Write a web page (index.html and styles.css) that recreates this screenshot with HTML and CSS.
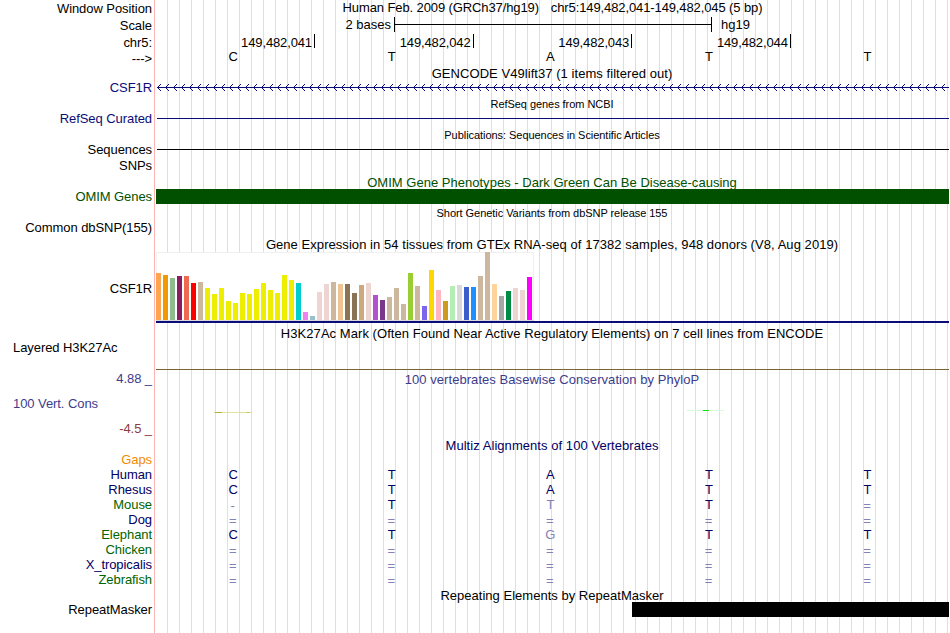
FILE: index.html
```html
<!DOCTYPE html>
<html lang="en">
  <head>
    <meta charset="utf-8" />
    <title>UCSC Genome Browser - hg19 chr5:149,482,041-149,482,045</title>
    <meta name="viewport" content="width=device-width, initial-scale=1" />
    <link rel="stylesheet" href="styles.css">
  </head>
  <body>
    <main class="browser">
      <!-- Ruler -->
      <div class="row window-row">
        <div class="label">Window Position</div>
        <div class="track window-title"><span>Human Feb. 2009 (GRCh37/hg19)</span><span>chr5:149,482,041-149,482,045 (5 bp)</span></div>
      </div>
      <div class="row scale-row">
        <div class="label">Scale</div>
        <div class="track scale">
          <span class="scale-size">2 bases</span>
          <div class="scale-bar"><div class="scale-line"></div></div>
          <span>hg19</span>
        </div>
      </div>
      <div class="row position-row">
        <div class="label">chr5:</div>
        <div class="track positions">
          <span>149,482,041</span>
          <span>149,482,042</span>
          <span>149,482,043</span>
          <span>149,482,044</span>
        </div>
      </div>
      <div class="row base-row">
        <div class="label">---&gt;</div>
        <div class="track bases"><span>C</span><span>T</span><span>A</span><span>T</span><span>T</span></div>
      </div>

      <!-- Gene tracks -->
      <h2 class="title">GENCODE V49lift37 (1 items filtered out)</h2>
      <div class="row">
        <div class="label navy">CSF1R</div>
        <div class="track">
          <svg class="intron" width="793" height="15" shape-rendering="crispEdges">
            <defs>
              <pattern id="chevron" width="8" height="15" patternUnits="userSpaceOnUse">
                <path d="M1 7h1v1h-1zM2 6h1v1h-1zM2 8h1v1h-1zM3 5h1v1h-1zM3 9h1v1h-1zM4 4h1v1h-1zM4 10h1v1h-1z" fill="#0c0c78" />
              </pattern>
            </defs>
            <rect width="793" height="15" fill="url(#chevron)" />
            <rect x="1" y="7" width="792" height="1" fill="#0c0c78" />
          </svg>
        </div>
      </div>

      <h2 class="title small">RefSeq genes from NCBI</h2>
      <div class="row">
        <div class="label navy">RefSeq Curated</div>
        <div class="track"><div class="thin-line navy-line"></div></div>
      </div>

      <h2 class="title small">Publications: Sequences in Scientific Articles</h2>
      <div class="row">
        <div class="label">Sequences</div>
        <div class="track"><div class="thin-line"></div></div>
      </div>
      <div class="row">
        <div class="label">SNPs</div>
      </div>

      <h2 class="title omim">OMIM Gene Phenotypes - Dark Green Can Be Disease-causing</h2>
      <div class="row">
        <div class="label omim">OMIM Genes</div>
        <div class="track"><div class="block omim-block"></div></div>
      </div>

      <h2 class="title small">Short Genetic Variants from dbSNP release 155</h2>
      <div class="row">
        <div class="label">Common dbSNP(155)</div>
      </div>

      <!-- GTEx expression -->
      <h2 class="title">Gene Expression in 54 tissues from GTEx RNA-seq of 17382 samples, 948 donors (V8, Aug 2019)</h2>
      <div class="row gtex-row">
        <div class="label">CSF1R</div>
        <div class="track gtex">
          <div class="gtex-chart" id="gtex-chart"></div>
          <div class="gene-model"></div>
        </div>
      </div>

      <!-- Regulation and conservation -->
      <h2 class="title">H3K27Ac Mark (Often Found Near Active Regulatory Elements) on 7 cell lines from ENCODE</h2>
      <div class="row layered-row">
        <div class="label left">Layered H3K27Ac</div>
        <div class="track"><div class="layered-line"></div></div>
      </div>

      <div class="row phylop-title-row">
        <div class="label phylop">4.88 _</div>
        <h2 class="title phylop">100 vertebrates Basewise Conservation by PhyloP</h2>
      </div>
      <div class="row phylop-row">
        <div class="label phylop-labels">
          <div class="left phylop">100 Vert. Cons</div>
          <div class="negative">-4.5 _</div>
        </div>
        <div class="track">
          <svg class="wiggle" width="793" height="51" shape-rendering="crispEdges">
            <rect x="58" y="26" width="38" height="1" fill="#e2e2a0" />
            <rect x="59" y="26" width="7" height="1" fill="#b4b432" />
            <rect x="90" y="26" width="4" height="1" fill="#c8c864" />
            <rect x="531" y="24" width="37" height="1" fill="#d8fad8" />
            <rect x="547" y="24" width="6" height="1" fill="#00f000" />
          </svg>
        </div>
      </div>

      <!-- Multiz alignment -->
      <h2 class="title multiz">Multiz Alignments of 100 Vertebrates</h2>
      <div class="row species">
        <div class="label gaps">Gaps</div>
      </div>
      <div class="row species">
        <div class="label dark-blue">Human</div>
        <div class="track bases"><span>C</span><span>T</span><span>A</span><span>T</span><span>T</span></div>
      </div>
      <div class="row species">
        <div class="label dark-blue">Rhesus</div>
        <div class="track bases"><span>C</span><span>T</span><span>A</span><span>T</span><span>T</span></div>
      </div>
      <div class="row species">
        <div class="label green">Mouse</div>
        <div class="track bases"><span class="gap">-</span><span>T</span><span class="diff">T</span><span>T</span><span class="gap">=</span></div>
      </div>
      <div class="row species">
        <div class="label dark-blue">Dog</div>
        <div class="track bases"><span class="gap">=</span><span class="gap">=</span><span class="gap">=</span><span class="gap">=</span><span class="gap">=</span></div>
      </div>
      <div class="row species">
        <div class="label green">Elephant</div>
        <div class="track bases"><span>C</span><span>T</span><span class="diff">G</span><span>T</span><span>T</span></div>
      </div>
      <div class="row species">
        <div class="label green">Chicken</div>
        <div class="track bases"><span class="gap">=</span><span class="gap">=</span><span class="gap">=</span><span class="gap">=</span><span class="gap">=</span></div>
      </div>
      <div class="row species">
        <div class="label dark-blue">X_tropicalis</div>
        <div class="track bases"><span class="gap">=</span><span class="gap">=</span><span class="gap">=</span><span class="gap">=</span><span class="gap">=</span></div>
      </div>
      <div class="row species">
        <div class="label green">Zebrafish</div>
        <div class="track bases"><span class="gap">=</span><span class="gap">=</span><span class="gap">=</span><span class="gap">=</span><span class="gap">=</span></div>
      </div>

      <h2 class="title repeat">Repeating Elements by RepeatMasker</h2>
      <div class="row">
        <div class="label">RepeatMasker</div>
        <div class="track"><div class="block repeat-block"></div></div>
      </div>
    </main>

    <script>
      // [height in px, tissue color]
      const tissues = [
        [47, "#ffa54f"], [45, "#ee9a00"], [42, "#8fbc8f"], [44, "#8b1c62"], [44, "#ee6a50"],
        [37, "#ff0000"], [38, "#cdb79e"], [32, "#eeee00"], [26, "#eeee00"], [32, "#eeee00"],
        [19, "#eeee00"], [17, "#eeee00"], [27, "#eeee00"], [26, "#eeee00"], [31, "#eeee00"],
        [37, "#eeee00"], [30, "#eeee00"], [27, "#eeee00"], [45, "#eeee00"], [40, "#eeee00"],
        [37, "#00cdcd"], [8, "#ee82ee"], [4, "#9ac0cd"], [28, "#eed5d2"], [36, "#eed5d2"],
        [38, "#cdb79e"], [36, "#eec591"], [36, "#8b7355"], [27, "#8b7355"], [35, "#cdaa7d"],
        [37, "#eed5d2"], [25, "#b452cd"], [20, "#7a378b"], [23, "#cdb79e"], [32, "#cdb79e"],
        [16, "#cdb79e"], [47, "#9acd32"], [34, "#cdb79e"], [14, "#7a67ee"], [50, "#ffd700"],
        [30, "#ffb6c1"], [19, "#cd9b1d"], [34, "#b4eeb4"], [35, "#d9d9d9"], [33, "#3a5fcd"],
        [33, "#1e90ff"], [44, "#cdb79e"], [68, "#cdb79e"], [36, "#ffd39b"], [24, "#a6a6a6"],
        [29, "#008b45"], [32, "#eed5d2"], [30, "#eed5d2"], [43, "#ff00ff"]
      ];

      const chart = document.getElementById("gtex-chart");

      tissues.forEach(([height, color]) => {
        const bar = document.createElement("div");
        bar.className = "tissue-bar";
        bar.style.height = `${height}px`;
        bar.style.backgroundColor = color;
        chart.appendChild(bar);
      });
    </script>
  </body>
</html>
```
FILE: styles.css
```css
body {
  margin: 0;
  background-color: #fff;
  color: #000;
  font-family: "Liberation Sans", Arial, sans-serif;
  font-size: 13px;
  line-height: 15px;
  overflow: hidden;
}

/* red divider on the left, blue guidelines every 12px */
.browser {
  box-sizing: border-box;
  width: 949px;
  height: 633px;
  background-image:
    linear-gradient(#ffb4b4, #ffb4b4),
    repeating-linear-gradient(to right, #dcdcf5 0, #dcdcf5 1px, transparent 1px, transparent 12px);
  background-size: 1px 100%, 782px 100%;
  background-position: 154px 0, 167px 0;
  background-repeat: no-repeat;
}

.row {
  display: grid;
  grid-template-columns: 152px 793px;
  column-gap: 4px;
  height: 16px;
}

.label {
  letter-spacing: -0.07px;
  text-align: right;
  white-space: pre;
}

.left {
  padding-left: 13px;
  text-align: left;
}

.title {
  box-sizing: border-box;
  height: 15px;
  margin: 0 0 0 155px;
  padding-top: 1px;
  font-size: 13px;
  font-weight: normal;
  letter-spacing: 0.055px;
  text-align: center;
  white-space: nowrap;
}

.title.small {
  font-size: 11px;
  letter-spacing: -0.05px;
}

.title.omim {
  letter-spacing: 0.02px;
}

.title.repeat {
  letter-spacing: 0.02px;
}

.window-row {
  height: 17px;
}

.window-row .label,
.scale-row .label,
.position-row .label {
  padding-top: 1px;
}

.window-title {
  display: flex;
  justify-content: center;
  gap: 12px;
  letter-spacing: -0.11px;
}

.scale-row {
  height: 17px;
}

.scale {
  display: flex;
}

.scale-size {
  width: 235px;
  margin-right: 3px;
  text-align: right;
}

.scale-bar {
  box-sizing: border-box;
  width: 318px;
  height: 15px;
  margin-right: 9px;
  padding-top: 7px;
  border-left: 1px solid #000;
  border-right: 1px solid #000;
}

.scale-line {
  height: 1px;
  background-color: #000;
}

.position-row {
  height: 15px;
}

.positions {
  display: grid;
  grid-template-columns: repeat(4, 158.6px);
  padding-left: 0.4px;
}

.positions span {
  box-sizing: border-box;
  height: 14px;
  padding: 1px 2px 0 0;
  border-right: 1px solid #000;
  letter-spacing: -0.13px;
  text-align: right;
}

.base-row .label {
  padding-top: 2px;
}

.bases {
  display: grid;
  grid-template-columns: repeat(5, 158.6px);
  margin-left: -2.1px;
  text-align: center;
}

.thin-line {
  height: 1px;
  margin: 7px 0 0 1px;
  background-color: #000;
}

.navy-line {
  background-color: #0c0c78;
}

.intron,
.wiggle {
  display: block;
}

.block {
  height: 15px;
}

.omim-block {
  background-color: #005000;
}

.repeat-block {
  margin-left: 476px;
  background-color: #000;
}

.gtex-row {
  height: 74px;
}

.gtex-row .label {
  padding-top: 30px;
}

.gtex {
  padding-top: 1px;
}

.gtex-chart {
  display: flex;
  align-items: flex-end;
  gap: 2px;
  box-sizing: border-box;
  width: 378px;
  height: 69px;
  background-color: #fff;
  border-bottom: 1px solid #d8d8d8;
  box-shadow: inset 1px 1px #f0f0f0, inset -1px 0 #f0f0f0;
}

.tissue-bar {
  flex: none;
  width: 5px;
}

.gene-model {
  height: 2px;
  background-color: #0c0c78;
}

.layered-row {
  height: 31px;
}

.layered-line {
  height: 1px;
  margin-top: 29px;
  background-color: #786432;
}

.phylop-title-row {
  grid-template-columns: 152px 794px;
  column-gap: 3px;
  height: 15px;
}

.phylop-title-row .title {
  margin-left: 0;
}

.phylop-row {
  height: 51px;
}

.phylop-labels {
  display: flex;
  flex-direction: column;
  gap: 10px;
  padding-top: 10px;
}

.species {
  height: 15px;
}

.species .bases {
  color: #000064;
}

.species .gap,
.species .diff {
  color: #8282b4;
}

.species .gap {
  padding: 1px 1px 0 0;
}

.navy {
  color: #0c0c78;
}

.omim {
  color: #005000;
}

.phylop {
  color: #3c3c8c;
}

.negative {
  color: #8c3c3c;
}

.multiz,
.dark-blue {
  color: #000064;
}

.green {
  color: #006400;
}

.gaps {
  color: #f08c00;
}
```
